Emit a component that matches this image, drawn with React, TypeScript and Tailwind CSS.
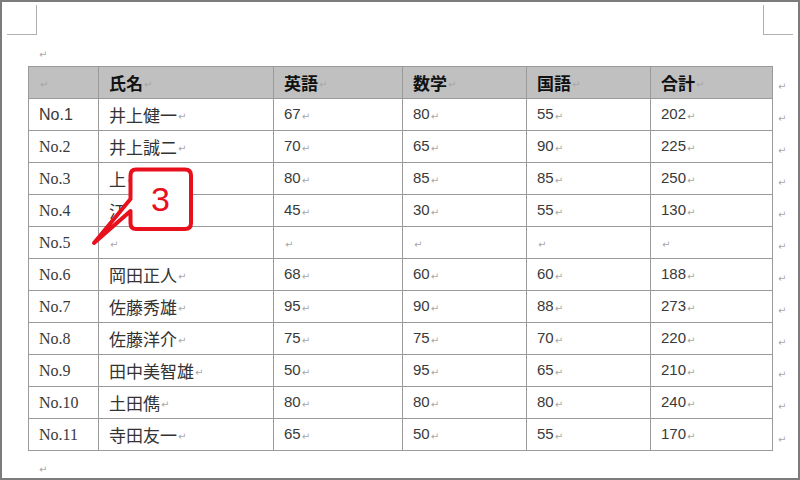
import React from "react";

const cols = [70, 175, 129, 124, 124, 122];
const rows: string[][] = [
  ["No.1", "井上健一", "67", "80", "55", "202"],
  ["No.2", "井上誠二", "70", "65", "90", "225"],
  ["No.3", "上", "80", "85", "85", "250"],
  ["No.4", "江", "45", "30", "55", "130"],
  ["No.5", "", "", "", "", ""],
  ["No.6", "岡田正人", "68", "60", "60", "188"],
  ["No.7", "佐藤秀雄", "95", "90", "88", "273"],
  ["No.8", "佐藤洋介", "75", "75", "70", "220"],
  ["No.9", "田中美智雄", "50", "95", "65", "210"],
  ["No.10", "土田儁", "80", "80", "80", "240"],
  ["No.11", "寺田友一", "65", "50", "55", "170"],
];
const header = ["", "氏名", "英語", "数学", "国語", "合計"];

const Mark = () => (
  <span className="text-[10px] leading-none text-[#a8a8a8] ml-[1px] relative top-[2px]" style={{ fontFamily: '"DejaVu Sans", sans-serif' }}>
    ↵
  </span>
);

const jp = { fontFamily: '"Noto Sans CJK JP", sans-serif' };
const sans = { fontFamily: '"Liberation Sans", "Noto Sans CJK JP", sans-serif' };
const serif = { fontFamily: '"Liberation Serif", serif' };

export default function App() {
  return (
    <div className="relative w-[800px] h-[480px] bg-white border-2 border-[#7c7c7c] box-border flex flex-col overflow-hidden">
      <div className="flex justify-between px-[5px] pt-[3px]">
        <div className="w-[30px] h-[30px] border-r border-b border-[#b0b0b0]" />
        <div className="w-[30px] h-[30px] border-l border-b border-[#b0b0b0]" />
      </div>
      <div className="h-[31px] pl-[36px] pt-[7px] leading-none">
        <Mark />
      </div>
      <div className="flex flex-col ml-[26px]">
        {[header, ...rows].map((r, ri) => (
          <div key={ri} className="flex items-center">
            <div className={`flex ${ri === 0 ? "bg-[#c0c0c0]" : ""}`}>
              {r.map((c, ci) => {
                const isLast = ci === r.length - 1;
                const isLastRow = ri === rows.length;
                let content: React.ReactNode = null;
                if (ri === 0) {
                  content = c ? (
                    <span className="text-[17px] font-bold text-[#111]" style={jp}>{c}</span>
                  ) : null;
                } else if (ci === 0) {
                  content = (
                    <span className="text-[16px] text-[#3a3a3a]" style={ri === 1 ? sans : serif}>{c}</span>
                  );
                } else if (ci === 1) {
                  content = <span className="text-[17px] text-[#333]" style={jp}>{c}</span>;
                } else {
                  content = <span className="text-[15px] text-[#3a3a3a]" style={sans}>{c}</span>;
                }
                return (
                  <div
                    key={ci}
                    className={`h-[32px] box-border border-t border-l border-[#9a9a9a] flex items-center pl-[10px] ${isLast ? "border-r" : ""} ${isLastRow ? "border-b h-[33px]" : ""}`}
                    style={{ width: cols[ci] + (isLast ? 1 : 0) }}
                  >
                    {content}
                    {!(ri > 0 && ci === 0) && <Mark />}
                  </div>
                );
              })}
            </div>
            <div className="pl-[4px]">
              <Mark />
            </div>
          </div>
        ))}
      </div>
      <div className="pl-[36px] pt-[6px] leading-none">
        <Mark />
      </div>

      <div className="absolute left-[86px] top-[160px] w-[110px] h-[86px]">
        <svg width="110" height="86" viewBox="86 160 110 86" className="absolute inset-0">
          <path
            d="M134 167.5 H183 Q189 167.5 189 173.5 V221 Q189 227 183 227 H134 Q128.5 227 128.5 221 V209 L92 241 L128.5 197 V173.5 Q128.5 167.5 134 167.5 Z"
            fill="white"
            stroke="#e8101c"
            strokeWidth="4"
            strokeLinejoin="round"
          />
        </svg>
        <div
          className="absolute left-[42px] top-[7px] w-[61px] h-[60px] flex items-center justify-center text-[34px] leading-none text-[#e8101c]"
          style={sans}
        >
          3
        </div>
      </div>
    </div>
  );
}
